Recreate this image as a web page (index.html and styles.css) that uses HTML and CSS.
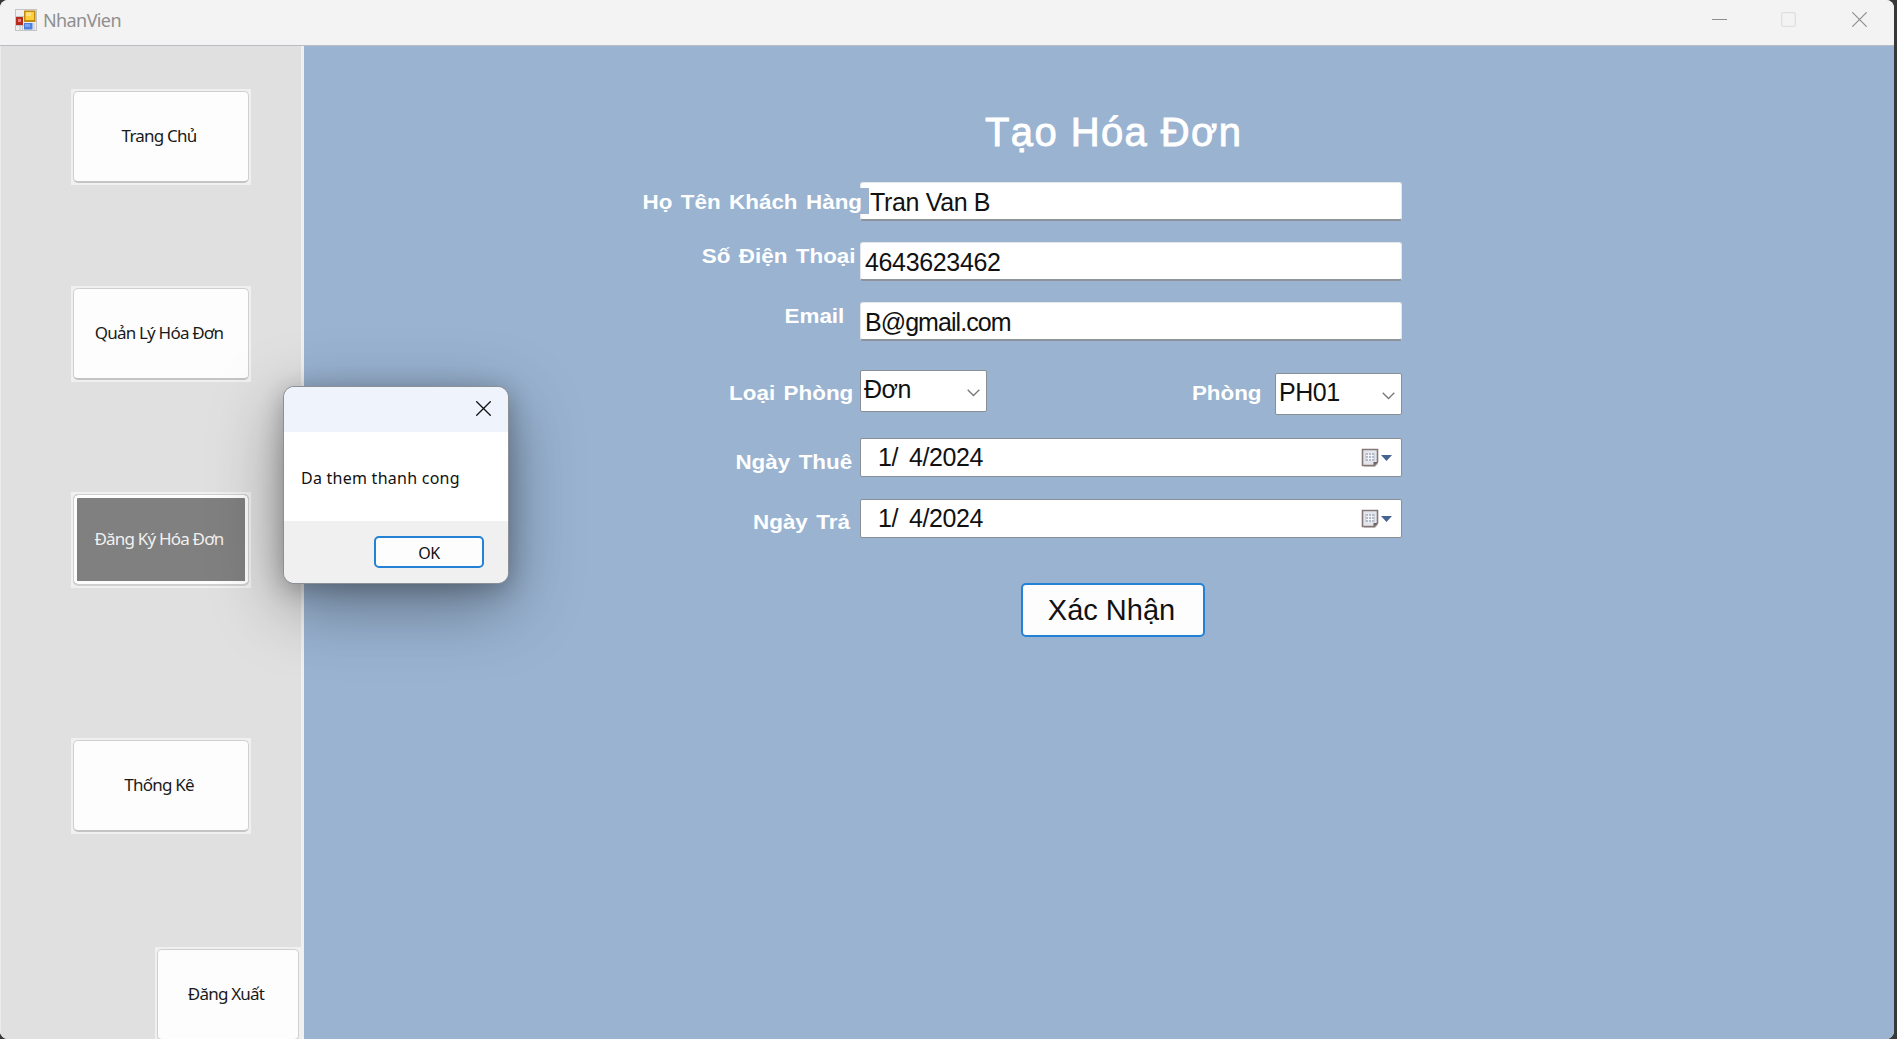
FILE: index.html
```html
<!DOCTYPE html>
<html lang="vi">
<head>
<meta charset="utf-8">
<title>NhanVien</title>
<link rel="stylesheet" href="styles.css">
</head>
<body>
<div class="desktop">
<div class="window">
  <header class="titlebar">
    <svg class="app-icon" width="22" height="22" viewBox="0 0 22 22">
      <rect x=".5" y=".5" width="21" height="21" fill="#efefef" stroke="#c4c4c4"/>
      <path d="M1 7.5h8M7.5 15v6M5 16v5M1 16.5h8M19 14v7" stroke="#c4c4c4"/>
      <rect x="9" y="1.500" width="11.500" height="11.500" fill="#c08a10"/>
      <rect x="10.500" y="3" width="8.500" height="8" fill="#ffcf3c"/>
      <rect x="11" y="3.500" width="5" height="3.500" fill="#ffe27e"/>
      <rect x="1" y="8" width="7" height="8" fill="#b52b20"/>
      <rect x="3" y="10" width="3" height="3" fill="#e98073"/>
      <rect x="9" y="14" width="8.500" height="6.500" fill="#4b80dc"/>
      <rect x="10" y="15" width="5" height="3" fill="#79a5f2"/>
    </svg>
    <span class="title">NhanVien</span>
    <div class="controls">
      <svg width="15" height="15" viewBox="0 0 15 15"><path d="M0 7.500h15" stroke="#8f8f8f"/></svg>
      <svg width="15" height="15" viewBox="0 0 15 15"><rect x=".7" y=".7" width="13.600" height="13.600" rx="1.500" fill="none" stroke="#dfdfdf" stroke-width="1.300"/></svg>
      <svg class="close" width="15" height="15" viewBox="0 0 15 15"><path d="M.3.3l14.400 14.400M14.700.3L.3 14.700" stroke="#8f8f8f" stroke-width="1.200"/></svg>
    </div>
  </header>
  <div class="body">
    <nav class="sidebar">
      <div class="nav-btn home"><span>Trang Chủ</span></div>
      <div class="nav-btn manage"><span>Quản Lý Hóa Đơn</span></div>
      <div class="nav-btn register active"><span>Đăng Ký Hóa Đơn</span></div>
      <div class="nav-btn stats"><span>Thống Kê</span></div>
      <div class="nav-btn logout"><span>Đăng Xuất</span></div>
    </nav>
    <main class="content">
      <h1>Tạo Hóa Đơn</h1>
      <div class="row name-row"><label>Họ Tên Khách Hàng</label><div class="input named">Tran Van B</div></div>
      <div class="row phone-row"><label>Số Điện Thoại</label><div class="input">4643623462</div></div>
      <div class="row email-row"><label>Email</label><div class="input">B@gmail.com</div></div>
      <div class="row room-row">
        <label>Loại Phòng</label>
        <div class="select">Đơn<svg width="13" height="8" viewBox="0 0 13 8"><path d="M.7.8l5.800 5.700L12.300.8" fill="none" stroke="#777" stroke-width="1.300"/></svg></div>
        <label class="room-label">Phòng</label>
        <div class="select room">PH01<svg width="13" height="8" viewBox="0 0 13 8"><path d="M.7.8l5.800 5.700L12.300.8" fill="none" stroke="#777" stroke-width="1.300"/></svg></div>
      </div>
      <div class="row from-row"><label>Ngày Thuê</label><div class="date"><span class="month">1/</span><span>4/2024</span>
        <svg width="31" height="20" viewBox="0 0 31 20"><path d="M2 3h15v13l-3 3H3z" fill="#ccc"/><path d="M1.500 1.500h15v12.500l-3 3.500h-12z" fill="#e3e6ed" stroke="#857776" stroke-width="1.600"/><path d="M4.500 5h9v8h-9z" fill="#b4bbc9"/><path d="M5 7.500h8M5 10.500h8M7.500 5v8M10.500 5v8" stroke="#fff" stroke-width=".8"/><path d="M12.500 17.500v-3.500h4z" fill="#6c5e5c"/><path d="M20 7h11l-5.500 6z" fill="#47638f"/></svg></div></div>
      <div class="row to-row"><label>Ngày Trả</label><div class="date"><span class="month">1/</span><span>4/2024</span>
        <svg width="31" height="20" viewBox="0 0 31 20"><path d="M2 3h15v13l-3 3H3z" fill="#ccc"/><path d="M1.500 1.500h15v12.500l-3 3.500h-12z" fill="#e3e6ed" stroke="#857776" stroke-width="1.600"/><path d="M4.500 5h9v8h-9z" fill="#b4bbc9"/><path d="M5 7.500h8M5 10.500h8M7.500 5v8M10.500 5v8" stroke="#fff" stroke-width=".8"/><path d="M12.500 17.500v-3.500h4z" fill="#6c5e5c"/><path d="M20 7h11l-5.500 6z" fill="#47638f"/></svg></div></div>
      <button class="submit"><span>Xác Nhận</span></button>
    </main>
  </div>
</div>
<section class="dialog">
  <div class="dialog-head"><svg width="15" height="15" viewBox="0 0 15 15"><path d="M.3.3l14.400 14.400M14.700.3L.3 14.700" stroke="#111" stroke-width="1.300"/></svg></div>
  <p>Da them thanh cong</p>
  <div class="dialog-foot"><button><span>OK</span></button></div>
</section>
</div>
</body>
</html>
```
FILE: styles.css
```css
* { box-sizing: border-box; }
body { margin: 0; background: #333; font-family: "Liberation Sans", Arial, sans-serif; overflow: hidden; }
.desktop { position: relative; width: 1897px; height: 1039px; overflow: hidden; background: #383838; }
.window { width: 1894px; height: 1039px; display: flex; flex-direction: column; border-radius: 8px; overflow: hidden; background: #f3f3f3; }
.titlebar { height: 45px; flex: none; display: flex; align-items: center; padding: 0 27px 5px 15px; background: #f3f3f3; }
.title { margin-left: 6px; font: 18px/24px "Noto Sans", sans-serif; letter-spacing: -.6px; color: #8f8f8f; }
.controls { margin-left: auto; display: flex; gap: 54px; }
.controls .close { margin-left: 2px; }
.controls svg { margin-top: -1px; }
.body { flex: 1; display: flex; border-top: 1px solid #b9bcc0; }
.sidebar { width: 304px; flex: none; display: flex; flex-direction: column; background: #e0e0e0; border-right: 3px solid #f0f0f0; border-left: 1px solid #ececec; padding-top: 43px; }
.nav-btn { width: 180px; height: 96px; margin-left: 70px; flex: none; padding: 2px; background: #f0f0f0; font: 17px/20px "Noto Sans", sans-serif; color: #1a1a1a; display: flex; }
.nav-btn span { flex: 1; display: flex; align-items: center; justify-content: center; padding: 0 4px 1px 0; background: #fdfdfd; border: 1px solid #d0d0d0; border-bottom: 2px solid #c4c4c4; border-radius: 5px; letter-spacing: -.8px; white-space: nowrap; }
.manage { margin-top: 101px; }
.register { margin-top: 110px; }
.register span { background: #808080; color: #f0f0f0; border-color: #d0d0d0; box-shadow: inset 0 0 0 3px #fdfdfd; }
.stats { margin-top: 150px; }
.logout { margin-top: 113px; margin-left: 154px; width: 146px; }
.content { flex: 1; background: #99b3d1; padding: 61px 0 0 336px; }
h1 { margin: 0 0 0 345px; height: 75px; font-size: 40px; line-height: 50px; font-weight: 400; -webkit-text-stroke: .9px #fff; letter-spacing: 1.4px; color: #fff; }
.row { display: flex; width: 762px; }
label { width: 220px; flex: none; text-align: right; white-space: nowrap; color: #fff; font-weight: 700; font-size: 20px; line-height: 24px; word-spacing: 2px; transform: scaleX(1.12); transform-origin: right; }
.input { position: relative; width: 542px; height: 39px; padding: 0 4px; background: #fff; border: 1px solid #e3e5e8; border-bottom: 2px solid #8d949c; border-radius: 3px; font-size: 25px; line-height: 38px; letter-spacing: -.35px; color: #111; }
.name-row { height: 60px; }
.name-row label { position: relative; z-index: 1; width: 222px; margin-right: -2px; padding-top: 8px; }
.named { padding-left: 9px; }
.named::before { content: ""; position: absolute; left: -1px; top: 5px; width: 9px; height: 26px; background: #99b3d1; }
.phone-row { height: 60px; }
.phone-row label { padding: 2px 4px 0 0; }
.email-row { height: 68px; }
.email-row label { padding: 2px 14px 0 0; }
.email-row .input { letter-spacing: -.95px; }
.room-row { height: 68px; }
.room-row label { padding: 11px 6px 0 0; }
.select { width: 127px; height: 42px; padding: 0 6px 0 3px; display: flex; justify-content: space-between; background: #fff; border: 1px solid #8a8f95; border-radius: 2px; font-size: 25px; line-height: 37px; letter-spacing: -.5px; color: #111; }
.select svg { margin-top: 18px; }
.room-row .room-label { width: 288px; padding-right: 12px; }
.select.room { margin-top: 3px; }
.date { width: 542px; height: 39px; display: flex; padding: 0 9px 0 17px; background: #fff; border: 1px solid #8a8f95; border-radius: 2px; font-size: 25px; line-height: 37px; letter-spacing: -.4px; color: #111; }
.date .month { width: 31px; }
.date svg { margin: 9px 0 0 auto; }
.from-row { height: 61px; }
.from-row label { padding: 12px 7px 0 0; }
.to-row { height: 84px; }
.to-row label { padding: 11px 9px 0 0; }
.submit { display: block; margin-left: 381px; width: 184px; height: 54px; padding: 0 3px 0 0; border: 2px solid #2482d6; border-radius: 5px; background: #fdfdfd; color: #111; font: 29px/48px "Liberation Sans", Arial, sans-serif; }
.dialog { position: absolute; left: 283px; top: 386px; width: 226px; height: 198px; display: flex; flex-direction: column; background: #fff; border: 1px solid #8b9097; border-radius: 11px; overflow: hidden; box-shadow: 0 20px 70px rgba(0,0,0,.38), 0 5px 24px rgba(0,0,0,.24); background-clip: padding-box; }
.dialog-head { height: 45px; display: flex; justify-content: flex-end; padding: 14px 17px 0 0; background: #eff3fb; }
.dialog p { margin: 0; height: 89px; padding: 35px 0 0 17px; font: 16px/22px "Noto Sans", sans-serif; letter-spacing: .25px; color: #111; }
.dialog-foot { flex: 1; display: flex; justify-content: flex-end; padding: 15px 24px 0 0; background: #f0f0f0; }
.dialog button { width: 110px; height: 32px; padding: 1px 0 0; border: 2px solid #2482d6; border-radius: 5px; background: #fdfdfd; color: #111; font: 16px/26px "Noto Sans", sans-serif; letter-spacing: -.5px; }
```
